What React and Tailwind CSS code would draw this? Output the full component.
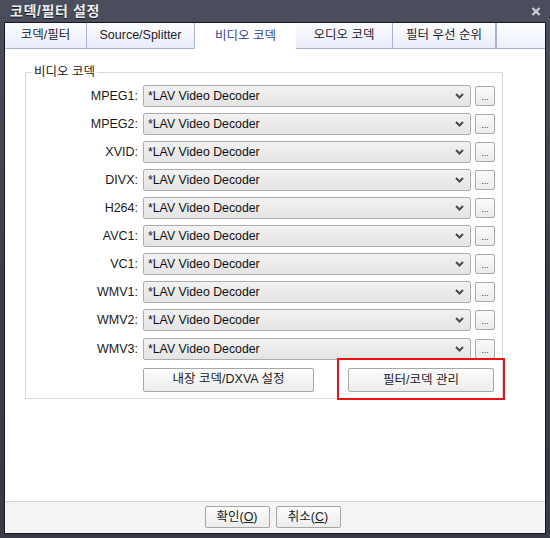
import React from 'react';

const codecs = ['MPEG1', 'MPEG2', 'XVID', 'DIVX', 'H264', 'AVC1', 'VC1', 'WMV1', 'WMV2', 'WMV3'];

const tabs = [
    { label: '코덱/필터', w: 'w-[82px]' },
    { label: 'Source/Splitter', w: 'w-[108px]' },
    { label: '비디오 코덱', w: 'w-[101px]', active: true },
    { label: '오디오 코덱', w: 'w-[97px]' },
    { label: '필터 우선 순위', w: 'w-[103px]' },
];

const font = { fontFamily: '"Liberation Sans", "Noto Sans CJK KR", Arial, sans-serif' };

function Chevron() {
    return (
        <svg width="9" height="6" viewBox="0 0 9 6">
            <path d="M1 1 L4.5 4.5 L8 1" stroke="#4a4a4a" strokeWidth="2" fill="none" />
        </svg>
    );
}

function CodecRow({ name }) {
    return (
        <div className="flex items-center h-[28px] last:mt-[1px]">
            <span className="w-[117px] text-right pr-[5px] text-[12.5px] text-[#1a1a1a]">{name}:</span>
            <div className="w-[328px] h-[22px] flex items-center justify-between pl-[4px] pr-[6px] border border-[#adadad] rounded-[2px] bg-gradient-to-b from-[#f2f2f2] to-[#e4e4e4] text-[12.3px] text-[#111]">
                <span>*LAV Video Decoder</span>
                <Chevron />
            </div>
            <div className="ml-[4px] w-[20px] h-[20px] border border-[#a8a8a8] rounded-[2px] bg-gradient-to-b from-[#fafafa] to-[#ececec] flex items-end justify-center pb-[3px] text-[9px] leading-none text-[#333]">...</div>
        </div>
    );
}

export default function App() {
    return (
        <div style={font} className="w-[550px] h-[538px] flex flex-col bg-gradient-to-b from-[#4b4e5d] via-[#3c3f4b] to-[#383a45] overflow-hidden">
            <div className="h-[22px] flex items-center justify-between pl-[10px] pr-[9px]">
                <span className="text-[14px] font-bold text-[#eceef4] tracking-[0.6px] [text-shadow:0_1px_1px_#1b1c22]">코덱/필터 설정</span>
                <svg width="10" height="9" viewBox="0 0 10 9" className="mt-[1px]">
                    <path d="M1.5 1 L8.5 8 M8.5 1 L1.5 8" stroke="#c9ccd4" strokeWidth="2.4" />
                </svg>
            </div>

            <div className="flex-1 flex flex-col ml-[4px] mr-[4px] mb-[4px] border border-[#17181d] bg-white">
                <nav className="flex h-[26px] bg-white">
                    {tabs.map((t) => (
                        <div
                            key={t.label}
                            className={
                                t.active
                                    ? `${t.w} flex items-center justify-center text-[12.5px] text-[#33449a] bg-white`
                                    : `${t.w} flex items-center justify-center text-[12.5px] text-[#1c1c2a] border-r border-b border-[#a9b1d4] bg-gradient-to-b from-[#fdfdff] to-[#e9ecf9]`
                            }
                        >
                            {t.label}
                        </div>
                    ))}
                    <div className="flex-1 border-b border-[#a9b1d4] border-l border-l-[#a9b1d4] bg-gradient-to-b from-[#fdfdff] to-[#eef0fb]" />
                </nav>

                <main className="flex-1 pl-[20px] pt-[23px]">
                    <div className="relative w-[478px] h-[327px] border border-[#d9d9d9] pt-[9px]">
                        <span className="absolute left-[6px] top-[-9px] px-[2px] bg-white text-[12.5px] text-[#1a1a1a] leading-[16px]">비디오 코덱</span>
                        <div className="flex flex-col">
                            {codecs.map((c) => (
                                <CodecRow key={c} name={c} />
                            ))}
                        </div>
                        <div className="flex items-center mt-[4px]">
                            <button className="ml-[117px] w-[171px] h-[24px] border border-[#a6a6a6] rounded-[2px] bg-gradient-to-b from-[#fdfdfd] to-[#ececec] text-[12.5px] text-[#1a1a1a]">내장 코덱/DXVA 설정</button>
                            <div className="relative ml-[34px]">
                                <button className="w-[146px] h-[24px] border border-[#a6a6a6] rounded-[2px] bg-gradient-to-b from-[#fdfdfd] to-[#ececec] text-[12.5px] text-[#1a1a1a]">필터/코덱 관리</button>
                                <div className="absolute left-[-11px] right-[-11px] top-[-9px] bottom-[-8px] border-2 border-[#ee1111]" />
                            </div>
                        </div>
                    </div>
                </main>

                <footer className="h-[32px] border-t border-[#d4d4d4] bg-[#f4f4f4] flex items-center justify-center gap-[6px] pb-[1px]">
                    <button className="ml-[-5px] w-[65px] h-[22px] border border-[#a6a6a6] rounded-[2px] bg-gradient-to-b from-[#fdfdfd] to-[#ececec] text-[12.5px] text-[#1a1a1a]">확인(<span className="underline">O</span>)</button>
                    <button className="w-[65px] h-[22px] border border-[#a6a6a6] rounded-[2px] bg-gradient-to-b from-[#fdfdfd] to-[#ececec] text-[12.5px] text-[#1a1a1a]">취소(<span className="underline">C</span>)</button>
                </footer>
            </div>
        </div>
    );
}
